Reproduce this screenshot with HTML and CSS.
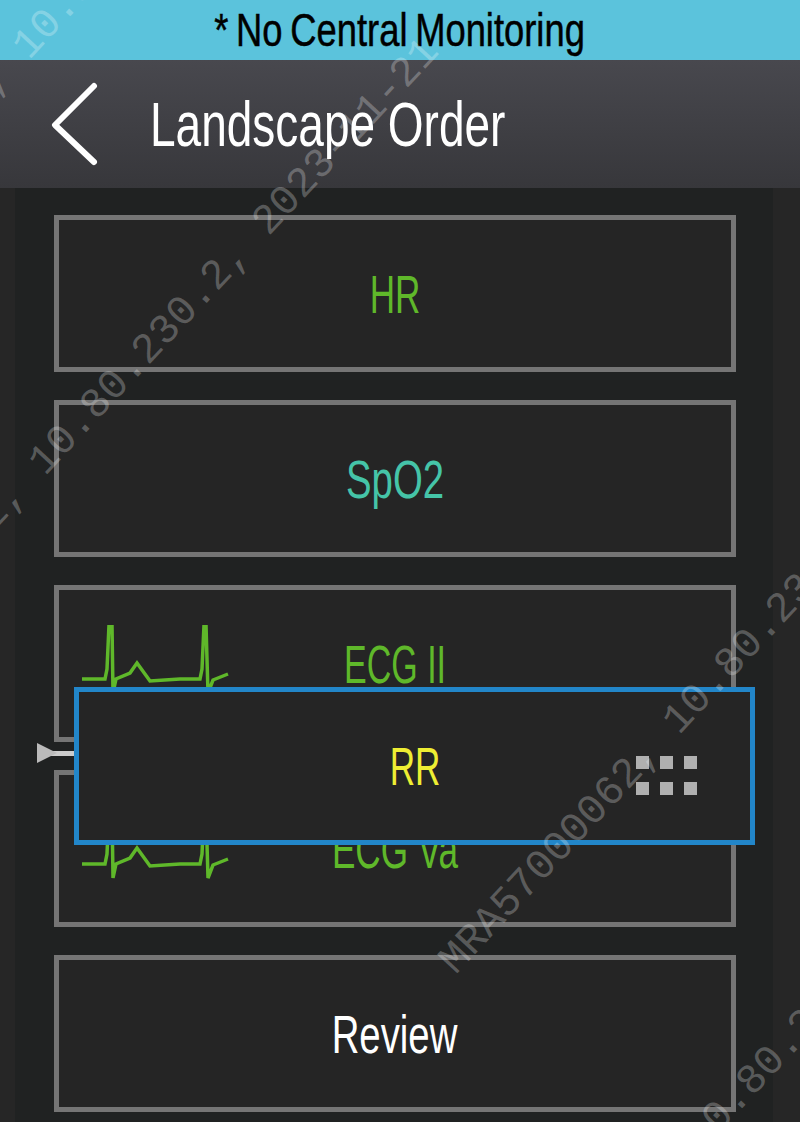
FILE: index.html
```html
<!DOCTYPE html>
<html lang="en">
<head>
    <meta charset="UTF-8">
    <meta name="viewport" content="width=device-width, initial-scale=1.0">
    <title>Landscape Order</title>
    <link rel="stylesheet" href="styles.css">
</head>
<body>
    <div class="page">
        <div class="banner"><span class="banner-text">* No Central Monitoring</span></div>

        <header class="title-bar">
            <svg class="back-icon" viewBox="0 0 48 84" aria-hidden="true">
                <polyline points="44,4 5,43 44,80" fill="none" stroke="#fff" stroke-width="6" stroke-linecap="round" stroke-linejoin="round"/>
            </svg>
            <h1 class="title-text">Landscape Order</h1>
        </header>

        <main class="list">
            <div class="row"><span class="label green">HR</span></div>
            <div class="row"><span class="label teal label-wide">SpO2</span></div>
            <div class="row">
                <svg class="trace" viewBox="0 0 150 70" aria-hidden="true">
                    <polyline points="2,54 25,54 27,44 29,0 32,0 33,68 36,54 50,48 57,38 70,56 100,54 120,54 122,44 124,0 126,0 128,68 133,55 148,49" fill="none" stroke="#5fb82a" stroke-width="3.5"/>
                </svg>
                <span class="label green label-tight">ECG II</span>
            </div>
            <div class="row">
                <svg class="trace" viewBox="0 0 150 70" aria-hidden="true">
                    <polyline points="2,54 25,54 27,44 29,0 32,0 33,68 36,54 50,48 57,38 70,56 100,54 120,54 122,44 124,0 126,0 128,68 133,55 148,49" fill="none" stroke="#5fb82a" stroke-width="3.5"/>
                </svg>
                <span class="label green">ECG Va</span>
            </div>
            <div class="row"><span class="label white label-wide">Review</span></div>

            <!-- item being dragged -->
            <div class="drag-row">
                <div class="drag-arrow"></div>
                <span class="label yellow">RR</span>
                <div class="grip">
                    <i></i><i></i><i></i>
                    <i></i><i></i><i></i>
                </div>
            </div>
        </main>

        <!-- watermark lies over everything -->
        <div class="watermark">
            <span class="wm wm-1">MRA57000062, 10.80.230.2, 2023-11-21</span>
            <span class="wm wm-2">MRA57000062, 10.80.230.2, 2023-11-21</span>
            <span class="wm wm-3">MRA57000062, 10.80.230.2, 2023-11-21</span>
            <span class="wm wm-4">MRA57000062, 10.80.230.2, 2023-11-21</span>
        </div>
    </div>
</body>
</html>
```
FILE: styles.css
```css
html, body {
    margin: 0;
    padding: 0;
    background-color: #262626;
}

.page {
    position: relative;
    width: 800px;
    height: 1122px;
    overflow: hidden;
    font-family: "Liberation Sans Narrow", "Liberation Sans", sans-serif;
}

/* top banner */
.banner {
    height: 60px;
    background-color: #5bc3dc;
    display: flex;
    justify-content: center;
    align-items: center;
}

.banner-text {
    display: inline-block;
    color: #000;
    font-size: 46px;
    word-spacing: -3px;
    white-space: nowrap;
    -webkit-text-stroke: .5px #000;
    transform: scaleX(.79);
}

/* title bar */
.title-bar {
    height: 128px;
    background: linear-gradient(#48484e, #37373b);
    display: flex;
    align-items: center;
    padding-left: 50px;
    box-sizing: border-box;
}

.back-icon {
    width: 48px;
    height: 84px;
    flex: none;
}

.title-text {
    margin: 0 0 0 52px;
    color: #fff;
    font-size: 63px;
    font-weight: normal;
    white-space: nowrap;
    transform: scaleX(.73);
    transform-origin: left center;
}

/* rows */
.list {
    position: relative;
    height: 934px;
    margin: 0 27px 0 15px;
    padding: 27px 37px 0 39px;
    box-sizing: border-box;
    background-color: #202222;
    display: flex;
    flex-direction: column;
    gap: 28px;
}

.row, .drag-row {
    display: grid;
    grid-template-columns: 1fr auto 1fr;
    align-items: center;
    height: 157px;
    box-sizing: border-box;
    background-color: #252525;
    border: 5px solid #757575;
}

.row > .label, .drag-row > .label {
    grid-column: 2;
    grid-row: 1;
}

.label {
    display: inline-block;
    font-size: 54px;
    white-space: nowrap;
    transform: scaleX(.65);
}

.label-wide { transform: scaleX(.71); }
.label-tight { transform: scaleX(.63); }

.green { color: #5fb82a; }
.teal { color: #45c4a8; }
.white { color: #fff; }
.yellow { color: #eeee33; }

.trace {
    grid-column: 1;
    grid-row: 1;
    align-self: start;
    width: 150px;
    height: 70px;
    margin: 35px 0 0 21px;
}

/* floating row */
.drag-row {
    position: absolute;
    left: 59px;
    top: 499px;
    width: 681px;
    height: 158px;
    border-color: #2286c9;
}

.drag-arrow {
    position: absolute;
    left: -42px;
    top: 59px;
    width: 37px;
    height: 5px;
    background-color: #ccc;
}

.drag-arrow::before {
    content: "";
    position: absolute;
    left: 0;
    top: -8px;
    border-left: 20px solid #bbb;
    border-top: 10px solid transparent;
    border-bottom: 10px solid transparent;
}

.grip {
    grid-column: 3;
    grid-row: 1;
    justify-self: end;
    margin: 18px 53px 0 0;
    display: grid;
    grid-template-columns: repeat(3, 13px);
    gap: 13px 11px;
}

.grip i {
    display: block;
    height: 13px;
    background-color: #b0b0b0;
}

/* watermark */
.watermark {
    position: absolute;
    inset: 0;
    pointer-events: none;
}

.wm {
    position: absolute;
    font-family: "Liberation Mono", monospace;
    font-size: 42px;
    color: rgba(255, 255, 255, .26);
    white-space: nowrap;
    transform: rotate(-47deg);
    transform-origin: left bottom;
}

.wm-1 { left: -169px; top: 677px; }
.wm-2 { left: 465px; top: 936px; }
.wm-3 { left: 487px; top: 1353px; }
.wm-4 { left: -185px; top: 261px; }
```
